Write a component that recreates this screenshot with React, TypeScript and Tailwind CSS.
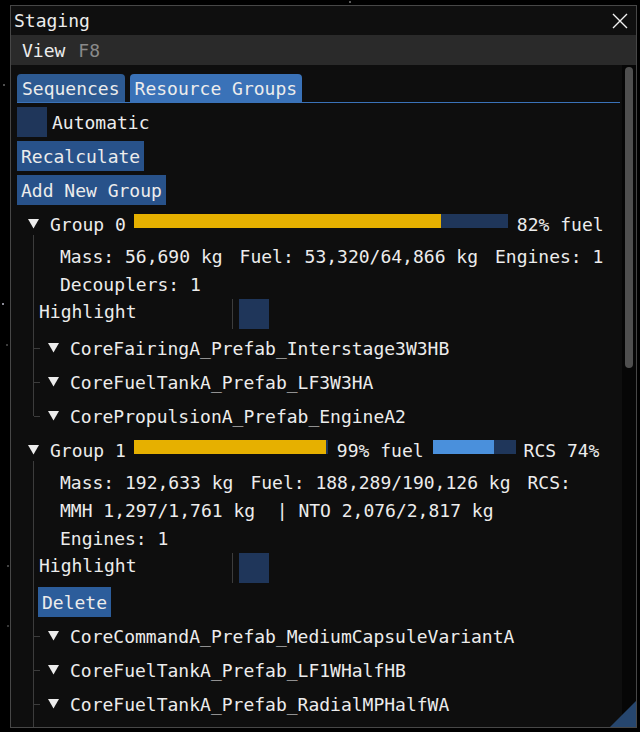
import React from 'react';

const stars = [
  { x: 3, y: 84, c: 'bg-[#6a6a6a]' },
  { x: 2, y: 303, c: 'bg-[#b8b8c8]' },
  { x: 6, y: 344, c: 'bg-[#505050]' },
  { x: 7, y: 565, c: 'bg-[#5a5a5a]' },
  { x: 7, y: 625, c: 'bg-[#4a4a4a]' },
  { x: 349, y: 1, c: 'bg-[#7a7a7a]' },
];

function Tri() {
  return (
    <svg width="11" height="10" viewBox="0 0 11 10" className="shrink-0">
      <polygon points="0,0 11,0 5.5,9.5" fill="#ececec" />
    </svg>
  );
}

function Bar({ w, fill, color }: { w: number; fill: number; color: string }) {
  return (
    <div className="h-[14px] bg-[#1f365a] mb-[6px] shrink-0 flex" style={{ width: w }}>
      <div className={`h-full ${color}`} style={{ width: Math.round(w * fill) }} />
    </div>
  );
}

function ChildNode({ name }: { name: string }) {
  return (
    <div className="h-[30px] flex items-center shrink-0">
      <div className="w-[6px] h-px bg-[#3c3c3c]" />
      <div className="ml-[8px]">
        <Tri />
      </div>
      <span className="ml-[11px] whitespace-nowrap">{name}</span>
    </div>
  );
}

function HighlightRow() {
  return (
    <div className="h-[30px] flex items-start shrink-0 pl-[5px]">
      <span className="w-[193px] leading-[24px] pt-[1px]">Highlight</span>
      <div className="w-px h-[30px] bg-[#3c3c3c]" />
      <div className="ml-[6px] w-[30px] h-[30px] bg-[#1f365a]" />
    </div>
  );
}

function Line({ children }: { children: React.ReactNode }) {
  return (
    <div className="h-[24px] leading-[24px] pt-[2px] pl-[26px] flex gap-[17px] whitespace-pre shrink-0">
      {children}
    </div>
  );
}

export default function App() {
  return (
    <div className="relative w-[640px] h-[732px] bg-black overflow-hidden font-['DejaVu_Sans_Mono',monospace] text-[18px] text-[#ececec]">
      {stars.map((s, i) => (
        <span key={i} className={`absolute w-[2px] h-[2px] rounded-full ${s.c}`} style={{ left: s.x, top: s.y }} />
      ))}

      <div className="absolute left-[10px] top-[5px] w-[627px] h-[723px] border border-[#474747] flex flex-col overflow-hidden">
        {/* title */}
        <div className="h-[29px] bg-[#0f0f0f] flex items-center justify-between pl-[3px] pr-[8px] shrink-0">
          <span className="leading-[24px]">Staging</span>
          <svg width="16" height="16" viewBox="0 0 16 16">
            <path d="M1 1 L15 15 M15 1 L1 15" stroke="#f2f2f2" strokeWidth="1.4" />
          </svg>
        </div>

        {/* menu */}
        <div className="h-[30px] bg-[#2a2a2a] flex items-center pl-[11px] shrink-0">
          <span>View</span>
          <span className="ml-[13px] text-[#8a8a8a]">F8</span>
        </div>

        <div className="flex-1 flex bg-[#0e0e0e] min-h-0">
          <div className="flex-1 flex flex-col pl-[6px] pr-[2px] overflow-hidden">
            {/* tabs */}
            <div className="pt-[9px] flex gap-[5px] shrink-0">
              <div className="h-[28px] px-[5px] flex items-center rounded-t-[4px] bg-[#2d5a92]">Sequences</div>
              <div className="h-[28px] px-[5px] flex items-center rounded-t-[4px] bg-[#3a72b8]">Resource Groups</div>
            </div>
            <div className="h-px bg-[#3a72b8] shrink-0" />

            <div className="flex flex-col gap-[4px] pt-[4px]">
              <div className="h-[30px] flex items-center shrink-0">
                <div className="w-[30px] h-[30px] bg-[#1f365a]" />
                <span className="ml-[5px]">Automatic</span>
              </div>
              <div className="h-[30px] self-start px-[4px] flex items-center bg-[#28528a] shrink-0">Recalculate</div>
              <div className="h-[30px] self-start px-[4px] flex items-center bg-[#28528a] shrink-0">Add New Group</div>

              {/* group 0 */}
              <div className="h-[30px] flex items-center pl-[11px] shrink-0">
                <Tri />
                <span className="ml-[11px] whitespace-nowrap">Group 0</span>
                <div className="ml-[8px]">
                  <Bar w={374} fill={0.82} color="bg-[#e6b000]" />
                </div>
                <span className="ml-[9px] whitespace-nowrap">82% fuel</span>
              </div>
              <div className="flex shrink-0 -mt-[8px]">
                <div className="ml-[16px] w-px bg-[#3c3c3c] mb-[15px] shrink-0" />
                <div className="flex flex-col gap-[4px] pt-[8px] flex-1">
                  <Line>
                    <span>Mass: 56,690 kg</span>
                    <span>Fuel: 53,320/64,866 kg</span>
                    <span>Engines: 1</span>
                  </Line>
                  <Line>
                    <span>Decouplers: 1</span>
                  </Line>
                  <HighlightRow />
                  <ChildNode name="CoreFairingA_Prefab_Interstage3W3HB" />
                  <ChildNode name="CoreFuelTankA_Prefab_LF3W3HA" />
                  <ChildNode name="CorePropulsionA_Prefab_EngineA2" />
                </div>
              </div>

              {/* group 1 */}
              <div className="h-[30px] flex items-center pl-[11px] shrink-0">
                <Tri />
                <span className="ml-[11px] whitespace-nowrap">Group 1</span>
                <div className="ml-[8px]">
                  <Bar w={194} fill={0.99} color="bg-[#e6b000]" />
                </div>
                <span className="ml-[9px] whitespace-nowrap">99% fuel</span>
                <div className="ml-[9px]">
                  <Bar w={83} fill={0.74} color="bg-[#4a90dc]" />
                </div>
                <span className="ml-[8px] whitespace-nowrap">RCS 74%</span>
              </div>
              <div className="flex shrink-0 -mt-[8px] min-h-[320px]">
                <div className="ml-[16px] w-px bg-[#3c3c3c] shrink-0" />
                <div className="flex flex-col gap-[4px] pt-[8px] flex-1">
                  <Line>
                    <span>Mass: 192,633 kg</span>
                    <span>Fuel: 188,289/190,126 kg</span>
                    <span>RCS:</span>
                  </Line>
                  <Line>
                    <span>MMH 1,297/1,761 kg  | NTO 2,076/2,817 kg</span>
                  </Line>
                  <Line>
                    <span>Engines: 1</span>
                  </Line>
                  <HighlightRow />
                  <div className="h-[30px] self-start ml-[4px] px-[4px] flex items-center bg-[#2c5d9b] shrink-0">Delete</div>
                  <ChildNode name="CoreCommandA_Prefab_MediumCapsuleVariantA" />
                  <ChildNode name="CoreFuelTankA_Prefab_LF1WHalfHB" />
                  <ChildNode name="CoreFuelTankA_Prefab_RadialMPHalfWA" />
                </div>
              </div>
            </div>
          </div>

          {/* scrollbar */}
          <div className="w-[14px] bg-[#060606] flex justify-center shrink-0">
            <div className="mt-[2px] w-[8px] h-[301px] rounded-full bg-[#4f4f4f]" />
          </div>
        </div>

        {/* resize grip */}
        <svg width="26" height="26" viewBox="0 0 26 26" className="absolute right-0 bottom-0">
          <polygon points="26,0 26,26 0,26" fill="#26466e" />
        </svg>
      </div>
    </div>
  );
}
